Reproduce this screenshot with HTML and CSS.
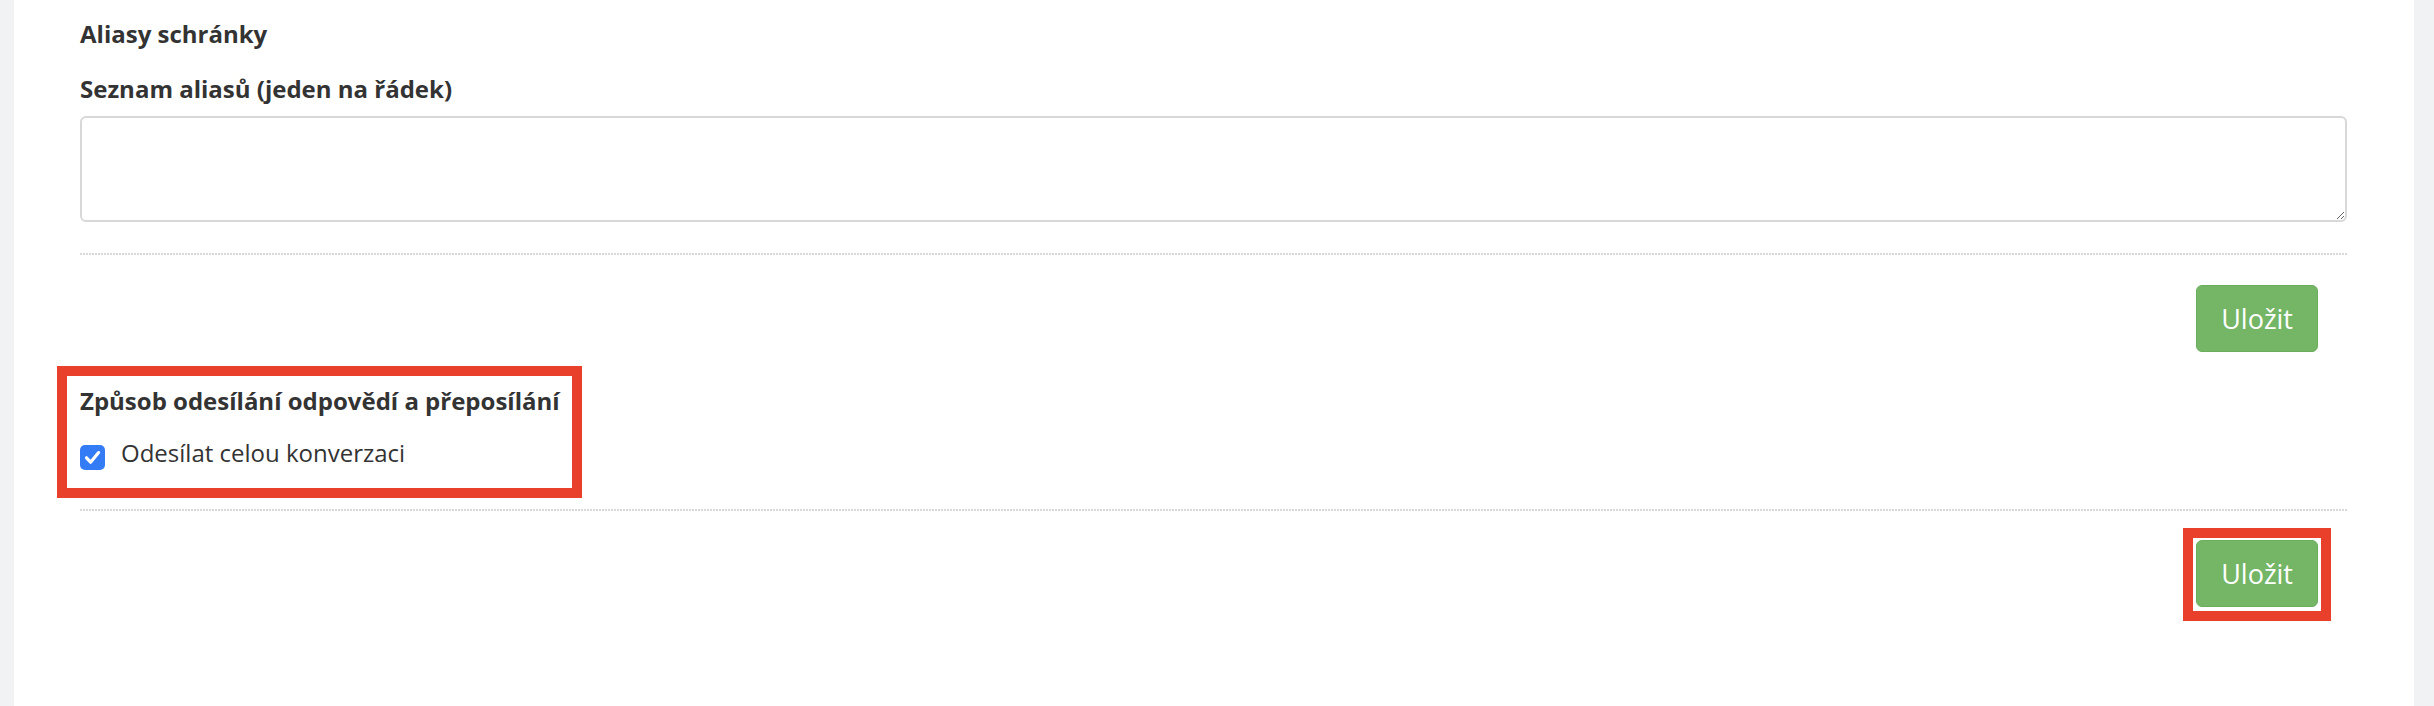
FILE: index.html
```html
<!DOCTYPE html>
<html lang="cs">
<head>
<meta charset="utf-8">
<title>Aliasy schránky</title>
<link rel="stylesheet" href="styles.css">
</head>
<body>
<main class="panel">
  <form class="form">
    <h3 class="section-title">Aliasy schránky</h3>
    <label class="field-label" for="aliases">Seznam aliasů (jeden na řádek)</label>
    <textarea id="aliases" class="textarea"></textarea>
    <div class="divider"></div>
    <div class="actions">
      <button type="button" class="btn-save">Uložit</button>
    </div>

    <section class="highlight-box">
      <h3 class="section-title">Způsob odesílání odpovědí a přeposílání</h3>
      <label class="check-row">
        <span class="checkbox" aria-checked="true" role="checkbox">
          <svg viewBox="0 0 25 25" width="25" height="25"><path d="M6.5 12.8 L10.6 17.2 L18.6 7.6" fill="none" stroke="#fff" stroke-width="3.2" stroke-linecap="round" stroke-linejoin="round"/></svg>
        </span>
        <span class="check-label">Odesílat celou konverzaci</span>
      </label>
    </section>
    <div class="divider divider-second"></div>
    <div class="actions actions-second">
      <span class="highlight-btn">
        <button type="button" class="btn-save">Uložit</button>
      </span>
    </div>
  </form>
</main>
</body>
</html>
```

FILE: styles.css
```css
* {
  box-sizing: border-box;
}

html, body {
  margin: 0;
  padding: 0;
  height: 100%;
}

body {
  background: #f1f2f4;
  font-family: "Open Sans", "Liberation Sans", sans-serif;
  color: #333333;
  font-size: 24px;
  line-height: 32px;
  overflow: hidden;
}

.panel {
  margin: 0 20px 0 14px;
  min-height: 100%;
  background: #ffffff;
  padding: 18px 67px 0 66px;
}

.form {
  display: flex;
  flex-direction: column;
}

.section-title {
  margin: 0;
  font-size: 24px;
  line-height: 32px;
  font-weight: 700;
}

.field-label {
  display: block;
  margin-top: 23px;
  font-weight: 700;
  line-height: 32px;
}

.textarea {
  display: block;
  margin-top: 11px;
  width: 100%;
  height: 106px;
  border: 2px solid #d8d8d8;
  border-radius: 6px;
  background: #fff;
  font-family: inherit;
  font-size: 21px;
  padding: 9px 15px;
  resize: vertical;
}

.divider {
  margin-top: 31px;
  height: 2px;
  background-image: repeating-linear-gradient(to right, #d9d9d9 0 2px, transparent 2px 3px);
}

.actions {
  display: flex;
  justify-content: flex-end;
  padding-right: 29px;
  margin-top: 30px;
}

.btn-save {
  display: block;
  font-family: "Open Sans", "Liberation Sans", sans-serif;
  font-size: 27px;
  line-height: 35px;
  padding: 15px 24px;
  color: #ffffff;
  background: #74b566;
  border: 1px solid #6aad5c;
  border-radius: 6px;
  cursor: pointer;
}

.highlight-box {
  align-self: flex-start;
  margin: 24px 0 0 -13px;
  padding: 9px 12px 18px 13px;
  outline: 10px solid #e8402a;
}

.check-row {
  display: flex;
  align-items: flex-start;
  gap: 16px;
  margin-top: 20px;
}

.checkbox {
  width: 25px;
  height: 25px;
  margin-top: 8px;
  border-radius: 5px;
  background: #347bf6;
  display: flex;
  flex: none;
}

.check-label {
  font-weight: 400;
  line-height: 32px;
}

.divider-second {
  margin-top: 21px;
}

.actions-second {
  margin-top: 17px;
  padding-right: 16px;
}

.highlight-btn {
  display: block;
  border: 10px solid #e8402a;
  padding: 2px 3px 4px 3px;
}
```
